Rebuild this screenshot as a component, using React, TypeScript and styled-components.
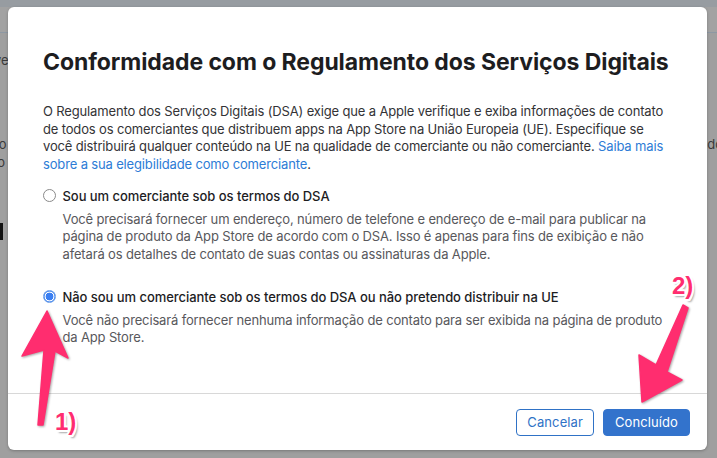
import React from "react";
import styled, { createGlobalStyle } from "styled-components";

const GlobalStyle = createGlobalStyle`
  html, body { margin: 0; padding: 0; }
  body {
    font-family: Inter, "Noto Sans", "Liberation Sans", sans-serif;
    -webkit-font-smoothing: antialiased;
  }
  * { box-sizing: border-box; }
`;

const Stage = styled.div`
  position: relative;
  width: 717px;
  height: 458px;
  overflow: hidden;
  background: #9f9f9f;
`;

const BgPage = styled.div`
  display: flex;
  flex-direction: column;
  height: 100%;
`;

const BgTopBand = styled.div`
  height: 7px;
  background: #979ca1;
`;

const BgHeader = styled.div`
  height: 26px;
  background: #a2a2a2;
  border-bottom: 1px solid #8d98a3;
`;

const BgBody = styled.div`
  flex: 1;
  display: flex;
  justify-content: space-between;
  padding-top: 18px;
  font-size: 13px;
  color: #3a3a3a;
  line-height: 18px;
`;

const BgColumn = styled.div<{ $end?: boolean }>`
  display: flex;
  flex-direction: column;
  align-items: ${(p) => (p.$end ? "flex-end" : "flex-start")};
`;

const BgText = styled.div<{ $mt?: number; $shift?: number }>`
  margin-top: ${(p) => p.$mt ?? 0}px;
  white-space: nowrap;
  transform: translateX(${(p) => p.$shift ?? -6}px);
`;

const BgBar = styled.div`
  margin-top: 52px;
  width: 3px;
  height: 17px;
  background: #111;
`;

const Modal = styled.div`
  position: absolute;
  top: 7px;
  left: 8px;
  width: 699px;
  height: 443px;
  background: #fff;
  border-radius: 6px;
  box-shadow: 0 1px 3px rgba(0, 0, 0, 0.25);
  display: flex;
  flex-direction: column;
`;

const Body = styled.div`
  flex: 1;
  padding: 41px 37px 0 35px;
  display: flex;
  flex-direction: column;
`;

const Title = styled.h1`
  margin: 0;
  font-size: 23px;
  line-height: 28px;
  font-weight: 700;
  color: #1d1d1f;
  letter-spacing: -0.08px;
  white-space: nowrap;
`;

const Intro = styled.p`
  margin: 27px 0 0;
  font-size: 13px;
  line-height: 17.6px;
  color: #333336;
  letter-spacing: -0.15px;
`;

const Link = styled.a`
  color: #2d7cd6;
  text-decoration: none;
`;

const Options = styled.div`
  display: flex;
  flex-direction: column;
  gap: 26px;
  margin-top: 15px;
`;

const Option = styled.label`
  display: grid;
  grid-template-columns: 13px 1fr;
  column-gap: 6.5px;
  align-items: start;
`;

const Radio = styled.span<{ $checked?: boolean }>`
  width: 13px;
  height: 13px;
  margin-top: 1px;
  border-radius: 50%;
  ${(p) =>
    p.$checked
      ? `background: radial-gradient(circle, #3b7ff2 0 3.6px, #ffffff 4.2px 4.6px, #4a8cf2 5.2px);
         border: 1px solid #6c9ee8;`
      : `background: #fff; border: 1px solid #8a8a8a;`}
`;

const OptionText = styled.div`
  display: flex;
  flex-direction: column;
  gap: 5px;
`;

const OptionLabel = styled.div`
  font-size: 13px;
  line-height: 17.5px;
  font-weight: 500;
  color: #1d1d1f;
  letter-spacing: -0.05px;
`;

const OptionDesc = styled.div`
  font-size: 13px;
  line-height: 17.5px;
  color: #58585c;
  letter-spacing: -0.15px;
`;

const Footer = styled.div`
  height: 57px;
  border-top: 1px solid #d8d8d8;
  display: flex;
  align-items: center;
  justify-content: flex-end;
  gap: 9px;
  padding-right: 17px;
`;

const Button = styled.button<{ $primary?: boolean }>`
  height: 27px;
  padding: 0 ${(p) => (p.$primary ? 11 : 10)}px;
  border-radius: 4px;
  font-family: inherit;
  font-size: 13px;
  letter-spacing: 0.1px;
  cursor: pointer;
  ${(p) =>
    p.$primary
      ? `background: #3373cc; color: #fff; border: 1px solid #3373cc;`
      : `background: #fff; color: #2f72c6; border: 1px solid #2f72c6;`}
`;

const Annotations = styled.svg`
  position: absolute;
  inset: 0;
  pointer-events: none;
  filter: drop-shadow(1px 1px 1px rgba(0, 0, 0, 0.35));
`;

const Callout = styled.span<{ $x: number; $y: number }>`
  position: absolute;
  left: ${(p) => p.$x}px;
  top: ${(p) => p.$y}px;
  font-family: "Liberation Sans", Arial, sans-serif;
  font-weight: 700;
  font-size: 24px;
  line-height: 24px;
  color: #ff2d6f;
  text-shadow:
    -1.5px -1.5px 0 #fff, 1.5px -1.5px 0 #fff, -1.5px 1.5px 0 #fff, 1.5px 1.5px 0 #fff,
    0 -2px 0 #fff, 0 2px 0 #fff, -2px 0 0 #fff, 2px 0 0 #fff,
    2.5px 3px 2px rgba(0, 0, 0, 0.35);
  pointer-events: none;
`;

export default function App() {
  return (
    <Stage>
      <GlobalStyle />
      <BgPage>
        <BgTopBand />
        <BgHeader />
        <BgBody>
          <BgColumn>
            <BgText>ve</BgText>
            <BgText $mt={66}>ro</BgText>
            <BgText>lo</BgText>
            <BgBar />
          </BgColumn>
          <BgColumn $end>
            <BgText $mt={84} $shift={6}>do</BgText>
          </BgColumn>
        </BgBody>
      </BgPage>

      <Modal role="dialog" aria-modal="true">
        <Body>
          <Title>Conformidade com o Regulamento dos Serviços Digitais</Title>
          <Intro>
            O Regulamento dos Serviços Digitais (DSA) exige que a Apple verifique e exiba informações de contato
            de todos os comerciantes que distribuem apps na App Store na União Europeia (UE). Especifique se
            você distribuirá qualquer conteúdo na UE na qualidade de comerciante ou não comerciante.{" "}
            <Link href="#">Saiba mais sobre a sua elegibilidade como comerciante</Link>.
          </Intro>
          <Options>
            <Option>
              <Radio />
              <OptionText>
                <OptionLabel>Sou um comerciante sob os termos do DSA</OptionLabel>
                <OptionDesc>
                  Você precisará fornecer um endereço, número de telefone e endereço de e-mail para publicar na
                  página de produto da App Store de acordo com o DSA. Isso é apenas para fins de exibição e não
                  afetará os detalhes de contato de suas contas ou assinaturas da Apple.
                </OptionDesc>
              </OptionText>
            </Option>
            <Option>
              <Radio $checked />
              <OptionText>
                <OptionLabel>Não sou um comerciante sob os termos do DSA ou não pretendo distribuir na UE</OptionLabel>
                <OptionDesc>
                  Você não precisará fornecer nenhuma informação de contato para ser exibida na página de produto
                  da App Store.
                </OptionDesc>
              </OptionText>
            </Option>
          </Options>
        </Body>
        <Footer>
          <Button>Cancelar</Button>
          <Button $primary>Concluído</Button>
        </Footer>
      </Modal>

      <Annotations width="717" height="458" viewBox="0 0 717 458">
        <path
          d="M47 311 L68 358 L55 351 L43 425 L38 425 L44 350 L22 356 Z"
          fill="#ff2d6f"
          stroke="#ff2d6f"
          strokeWidth="1.5"
          strokeLinejoin="round"
        />
        <path
          d="M683 305 L688 308 L667 372 L682 380 L642 402 L639 355 L656 365 Z"
          fill="#ff2d6f"
          stroke="#ff2d6f"
          strokeWidth="1.5"
          strokeLinejoin="round"
        />
      </Annotations>
      <Callout $x={55} $y={410}>1)</Callout>
      <Callout $x={672} $y={274}>2)</Callout>
    </Stage>
  );
}
